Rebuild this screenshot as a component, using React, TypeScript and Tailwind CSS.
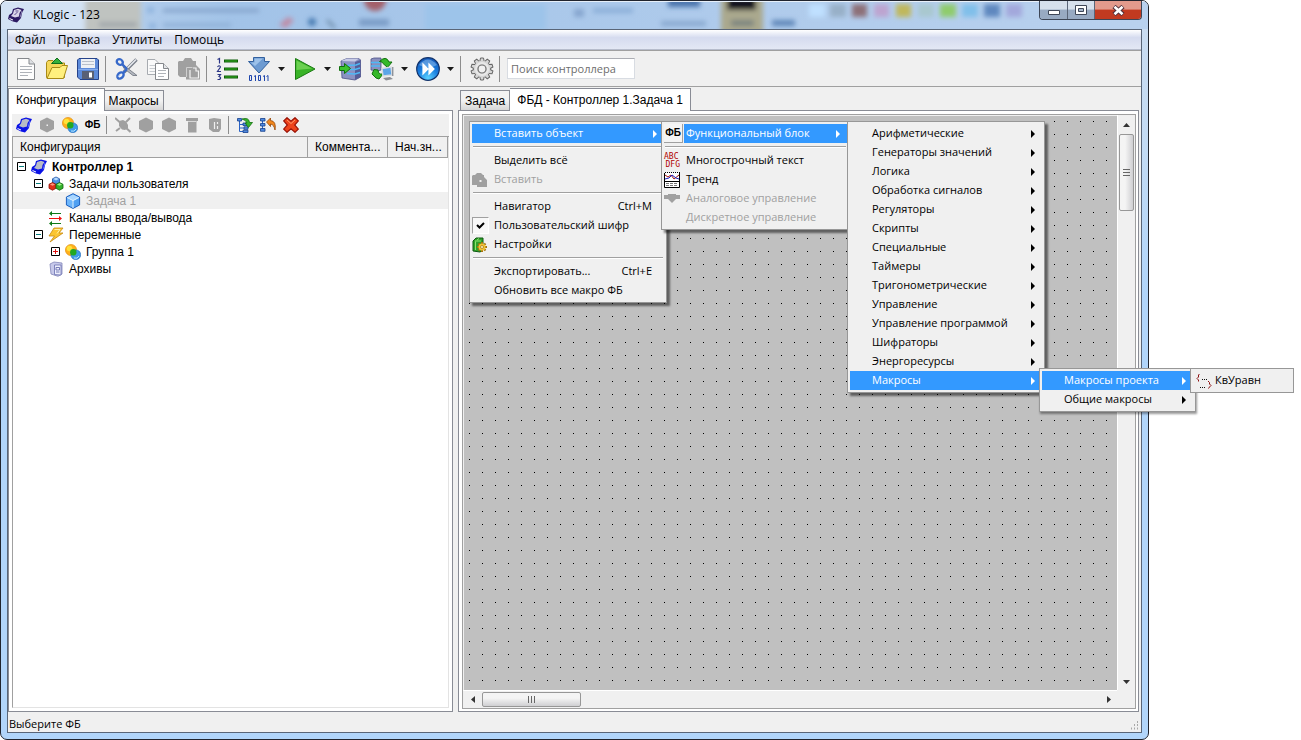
import type { ReactNode } from "react";

const SANS = "font-['Open_Sans','Noto_Sans',sans-serif]";
const ARIAL = "font-['Liberation_Sans',Arial,sans-serif]";

function Svg({ w, h = w, box, children }: { w: number; h?: number; box?: string; children: ReactNode }) {
  return (
    <svg width={w} height={h} viewBox={box ?? `0 0 ${w} ${h}`} className="block shrink-0" aria-hidden="true">
      {children}
    </svg>
  );
}

/* ---------- shared icons ---------- */

const Controller = ({ dark = false }: { dark?: boolean }) => (
  <Svg w={16}>
    <path d="M5 2 L10 .5 L16 2 L14 6 L13 11 L9 15.5 L5 14.5 L0 12 L1 8 L4 6 Z" fill={dark ? "#2c1a63" : "#0a12e6"} />
    <path d="M6 3 L10 1.8 L13.5 3 L11.5 6 L11 9.5 L7 10.5 L3 9 L5 6.5 Z" fill={dark ? "#d9d4e8" : "#b9bcc6"} />
    <path d="M1.5 11 L5 12.500 V13.500 L1.500 12 Z" fill="#fff" />
    <path d="M12 10.500 L14 4" stroke={dark ? "#8f86b5" : "#5a6cff"} />
    {dark && <path d="M6.500 8 l3 -3 M7.500 4 h3" stroke="#5c4c8c" />}
  </Svg>
);

const Circles = () => (
  <Svg w={16}>
    <circle cx="6" cy="6" r="5.6" fill="#ffb01c" stroke="#e08a00" strokeWidth=".6" />
    <circle cx="4.5" cy="4.5" r="2.8" fill="#ffe23a" />
    <circle cx="10.8" cy="10.8" r="4.9" fill="#3f9bea" stroke="#2467b6" strokeWidth=".6" />
    <path d="M9 14 a4 4 0 0 0 5 -2" stroke="#b8e2ff" fill="none" />
    <circle cx="8.3" cy="8.3" r="3.2" fill="#22a822" />
  </Svg>
);

const Fb = () => <span className="font-['Liberation_Sans',Arial,sans-serif] text-[10px] leading-4 font-bold text-black">ФБ</span>;

const Hex = ({ dot = false }: { dot?: boolean }) => (
  <Svg w={16}>
    <path d="M8 .5 L15 4 V12 L8 15.5 L1 12 V4 Z" fill="#a0a0a0" />
    {dot && <path d="M7.500 7.500 h1.500 v1.500 h-1.500 z" fill="#f0f0f0" />}
  </Svg>
);

const Cube = () => (
  <Svg w={16}>
    <path d="M8 .7 L14.6 4 V12 L8 15.4 L1.4 12 V4 Z" fill="#4fa0f2" stroke="#1c60c0" />
    <path d="M8 1.5 L14 4.4 L8 7.4 L2 4.4 Z" fill="#a9d6ff" />
    <path d="M2 5 L7.6 8 V14.6 L2 11.6 Z" fill="#6db6fb" />
    <path d="M2 4.5 L8 7.6 L14 4.5 M8 7.6 V15" stroke="#e3f3ff" fill="none" />
  </Svg>
);

const Cubes = () => (
  <Svg w={16}>
    <path d="M8 1 L11.5 2.8 V6.8 L8 8.6 L4.5 6.8 V2.8 Z" fill="#4b8de0" stroke="#1d4d9d" strokeWidth=".8" />
    <path d="M8 1.6 L10.8 3 L8 4.4 L5.2 3 Z" fill="#b6dbff" />
    <path d="M4.5 6.5 L8 8.3 V12.3 L4.5 14.2 L1 12.3 V8.3 Z" fill="#e0301c" stroke="#8f1408" strokeWidth=".8" />
    <path d="M4.5 7.3 L7 8.6 L4.5 9.8 L2 8.6 Z" fill="#ff9a80" />
    <path d="M11.5 6.5 L15 8.3 V12.3 L11.5 14.2 L8 12.3 V8.3 Z" fill="#34b12c" stroke="#12660e" strokeWidth=".8" />
    <path d="M11.5 7.3 L14 8.6 L11.5 9.8 L9 8.6 Z" fill="#a6f08c" />
  </Svg>
);

const Channels = () => (
  <Svg w={16}>
    <path d="M3 3.5 H13 M4 13.5 H13" stroke="#0f7a18" strokeWidth="1.2" />
    <path d="M1 3.5 L4 1 V6 Z M1 13.5 L4 11 V16 Z" fill="#0f7a18" />
    <path d="M1 8.5 H12" stroke="#f01010" strokeWidth="1.2" />
    <path d="M14 8.5 L11 6 V11 Z" fill="#f01010" />
  </Svg>
);

const Lightning = () => (
  <Svg w={16}>
    <path d="M6 1 H15 L11 6 H15 L2 15 L6.5 9 H1 Z" fill="#fbc531" stroke="#c98a10" strokeWidth=".8" />
    <path d="M6.5 2.5 H12 L9 6.5" stroke="#fff1a8" fill="none" />
  </Svg>
);

const Archive = () => (
  <Svg w={16}>
    <path d="M2 3 L6 1 L14 2 V13 L10 15.3 L3 13 Z" fill="#c7c9ea" stroke="#8285b8" strokeWidth=".8" />
    <path d="M6.5 4 H13 V14 L6.5 13.6 Z" fill="#eceefc" stroke="#6a6eb0" strokeWidth=".8" />
    <path d="M8 6.5 h3.5 v2.500 h-3.500 z M8 11 h3.5" stroke="#6a6eb0" fill="none" strokeWidth=".9" />
  </Svg>
);

/* ---------- main toolbar icons ---------- */

const Page = () => (
  <Svg w={24}>
    <path d="M3.5 1.5 H15 L20.5 7 V22.5 H3.5 Z" fill="#fdfdfd" stroke="#85888c" />
    <path d="M15 1.5 V7 H20.5" fill="#dcdfe3" stroke="#85888c" />
    <path d="M6 9.5 H18 M6 12.5 H18 M6 15.5 H18 M6 18.5 H14" stroke="#aeb2b8" />
  </Svg>
);

const Open = () => (
  <Svg w={24}>
    <path d="M1.5 20.5 V5.5 L3 3.5 H8 L10 6 H19.5 V20.5 Z" fill="#f5d75a" stroke="#a88a16" />
    <path d="M2 21.5 L7 10.5 H15 L17 8.5 H22.5 L18.5 21.5 Z" fill="#fff07e" stroke="#a88a16" />
    <path d="M12 1 L17.5 6.5 H6.5 Z" fill="#35b03b" stroke="#11701c" />
  </Svg>
);

const Save = () => (
  <Svg w={24}>
    <path d="M1.5 3 L3 1.5 H21 L22.5 3 V22.5 H4 L1.5 20 Z" fill="#5d8bda" stroke="#26438a" />
    <path d="M5 2 H19 V11 H5 Z" fill="#eef1f5" />
    <path d="M6 4.5 H18 M6 7.5 H18" stroke="#b9c0cb" />
    <path d="M6 14 H18 V22 H6 Z" fill="#596074" />
    <path d="M13 15.5 H16 V20.5 H13 Z" fill="#fff" />
    <path d="M2 12.5 H22" stroke="#86aef0" />
  </Svg>
);

const Cut = () => (
  <Svg w={24}>
    <path d="M21.5 2.5 L9 15" stroke="#777d87" strokeWidth="3.4" />
    <path d="M21 2.5 L9 14.5" stroke="#e5e8ee" strokeWidth="1.6" />
    <path d="M7 7 L22 18.5 L18 18.5 L9 11.5 Z" fill="#b4b8c0" stroke="#6c727c" strokeWidth=".8" />
    <ellipse cx="4.800" cy="5" rx="3.2" ry="2.6" fill="none" stroke="#3769c9" strokeWidth="2.4" transform="rotate(35 4.800 5)" />
    <ellipse cx="5.5" cy="18.5" rx="3.6" ry="2.6" fill="none" stroke="#3769c9" strokeWidth="2.4" transform="rotate(-45 5.5 18.5)" />
    <path d="M7 7 L12 12 M8 16 L12 12" stroke="#3769c9" strokeWidth="2.4" />
    <path d="M3.500 3.500 l2 0 M3 20 l2 -3" stroke="#9dbdf3" />
  </Svg>
);

const Copy = () => (
  <Svg w={24}>
    <path d="M1.5 2.5 H9 L13 6.5 V17.5 H1.5 Z" fill="#fafafa" stroke="#a7abb0" />
    <path d="M3.5 8.5 H9 M3.5 11.5 H9 M3.5 14.5 H9" stroke="#c8ccd0" />
    <path d="M9.5 6.5 H17.5 L22.5 11.5 V22.5 H9.5 Z" fill="#fff" stroke="#85888c" />
    <path d="M17.5 6.5 V11.5 H22.5" fill="#e3e5e8" stroke="#85888c" />
    <path d="M12 13.5 H20 M12 16.5 H20 M12 19.5 H18" stroke="#b0b4b9" />
  </Svg>
);

const Paste = () => (
  <Svg w={24}>
    <path d="M2 4 H6 L8 1 H14 L16 4 H19 V8 L23 12 V22.5 H9 V20 H3 L1 18 V5 Z" fill="#a0a0a0" />
    <path d="M9.5 20 V10.5 H15.500" stroke="#cfcfcf" fill="none" />
    <path d="M16 11 H19 V14 H21.500 V21 H13 V13" stroke="#f4f4f4" strokeWidth="1.2" fill="none" />
  </Svg>
);

const Numbered = () => (
  <Svg w={24}>
    <path d="M1.5 2.5 L3.5 1.5 V6.5 M1.5 10 Q3.5 7.5 4.5 10 L1.5 14.5 H5 M1.5 17.5 H4.5 L3 19.5 Q6 20.5 3.5 22.5 H1.5" stroke="#2b3585" strokeWidth="1.2" fill="none" />
    <path d="M8 4 H22 M8 12 H22 M8 20 H22" stroke="#0c5c08" strokeWidth="3.2" />
    <path d="M9 4 H21 M9 12 H21 M9 20 H21" stroke="#36b222" strokeWidth="1.2" />
  </Svg>
);

const Download = () => (
  <Svg w={24}>
    <path d="M6.5 .5 H17.5 V4.5 H22.5 L12 16 L1.5 4.5 H6.5 Z" fill="#6d9bd2" stroke="#33619f" />
    <path d="M7.5 1.5 H16 L8 9 L4 5.5 H7.5 Z" fill="#9dc2ea" />
    <path d="M2.500 18.5 h2 v5 h-2 z M7 19.500 l1.500 -1 V24 M11.500 18.5 h2 v5 h-2 z M16 19.500 l1.500 -1 V24 M19.500 19.500 l1.500 -1 V24" stroke="#1f46ad" fill="none" />
  </Svg>
);

const Play = () => (
  <Svg w={24}>
    <path d="M2.5 1.5 L22 12 L2.5 22.5 Z" fill="#39b327" stroke="#1b7a12" />
    <path d="M3.5 3.5 L19 11.5 L3.5 13 Z" fill="#6bd050" />
  </Svg>
);

const DbArrow = () => (
  <Svg w={24}>
    <path d="M2 4 L8 1.500 H20 L21.500 3 V20 L16 23 L3 21 Z" fill="#8b92c2" stroke="#4b5186" strokeWidth=".8" />
    <path d="M2 4 L8 1.500 H20 L16 4.500 Z" fill="#c7cbe6" />
    <path d="M16 5 L21.500 3 V20 L16 23 Z" fill="#565d98" />
    <path d="M8 8.5 L17 8 L21 6.500 M10 12.5 H16 L21 11 M8 16.5 L16 17 L21 15.500" stroke="#4eb8f5" strokeWidth="1.400" fill="none" />
    <path d="M.5 9.5 H5.5 V6.5 L11.5 11.5 L5.5 16.5 V13.5 H.5 Z" fill="#3cc42f" stroke="#11700e" />
  </Svg>
);

const Sync = () => (
  <Svg w={24}>
    <path d="M1 2 L4 1 H11 V13 L8 14 L1 13 Z" fill="#8a90be" stroke="#4b5186" strokeWidth=".8" />
    <path d="M1 5.5 H10 M1 9 H10" stroke="#4eb8f5" strokeWidth="1.400" />
    <path d="M9.500 4.500 Q16 -2 19 5 H22 L17.5 10.5 L12.500 6 Q12.500 4.500 9.500 4.500 Z" fill="#35b829" stroke="#11700e" />
    <path d="M4 12.5 L2 17 L6 21 L9 22 L13 17 H10.5 Q8 16.500 8 13 Z" fill="#35b829" stroke="#11700e" />
    <path d="M12 11.5 L21 10 L22 18 L13 19 Z" fill="#5ba5e8" stroke="#d5dae0" strokeWidth="1.400" />
    <path d="M13 21 L20 20 L23 22 L16 23.500 Z" fill="#8b8e94" />
    <path d="M22.800 10 V19" stroke="#6a6f78" />
  </Svg>
);

const Forward = () => (
  <Svg w={24}>
    <defs>
      <radialGradient id="ball" cx=".5" cy=".9" r=".9">
        <stop offset="0" stopColor="#5cd2ff" />
        <stop offset=".5" stopColor="#1a7fe0" />
        <stop offset="1" stopColor="#1455b5" />
      </radialGradient>
    </defs>
    <circle cx="12" cy="12" r="11.3" fill="url(#ball)" stroke="#12336b" strokeWidth="1.2" />
    <path d="M3 8 Q12 -3 21 8 Q12 13 3 8 Z" fill="#a8d2f8" opacity=".45" />
    <path d="M7 7 L12 12 L7 17 Z M13 7 L18 12 L13 17 Z" fill="#fff" stroke="#fff" strokeWidth="1.200" />
  </Svg>
);

const teeth = [0, 36, 72, 108, 144, 180, 216, 252, 288, 324];
const Gear = () => (
  <Svg w={24}>
    {teeth.map((a) => (
      <path key={a} d="M9.8 4.5 L10.5 1 H13.5 L14.2 4.5" fill="#d6d6d6" stroke="#666" transform={`rotate(${a} 12 12)`} />
    ))}
    <circle cx="12" cy="12" r="8.2" fill="#d6d6d6" />
    <circle cx="12" cy="12" r="6" fill="none" stroke="#e8e8e8" strokeWidth="2" />
    <circle cx="12" cy="12" r="4" fill="#f0f0f0" stroke="#707070" strokeWidth="1.2" />
  </Svg>
);

/* ---------- configuration toolbar icons ---------- */

const Plug = () => (
  <Svg w={16}>
    <path d="M4 4 L8 3 L11 4.500 L13 8 V11 L10 13 L7 12.500 L4 9 Z" fill="#a0a0a0" />
    <path d="M0 1 L15.500 15 M11 5 L15 1 M5 11 L1 14" stroke="#a0a0a0" strokeWidth="2" />
  </Svg>
);
const Bin = () => (
  <Svg w={16}>
    <path d="M2 1 H14 V4 H12.5 V15.5 H4 V4 H2 Z" fill="#a0a0a0" />
    <path d="M4 4.5 H12" stroke="#d8d8d8" />
  </Svg>
);
const Book = () => (
  <Svg w={16}>
    <path d="M2 2 L7 1 L14 2 V12 L12 15 H6 L2 12 Z" fill="#a0a0a0" />
    <path d="M7.5 5 V12 M10.5 5 V7 M10.5 9 V12" stroke="#efefef" strokeWidth="1.2" />
  </Svg>
);
const TreeAdd = () => (
  <Svg w={16}>
    <path d="M2.5 3 V14.5 H8 M2.5 7.5 H8 M2.5 11 H8" stroke="#2a62c4" fill="none" />
    <path d="M.5 1.5 h4 v2.5 h-4 z M6 6 h4 v2.5 h-4 z M7 9.8 h4 v2.5 h-4 z M6 13.2 h5 v2.3 h-5 z" fill="#4f8ae0" stroke="#153f8c" strokeWidth=".8" />
    <path d="M5 2 Q12 0 12.5 5.5 H15.5 L11.5 10.5 L8 6 H10 Q9 3 5 2 Z" fill="#37b32c" stroke="#11700e" strokeWidth=".8" />
  </Svg>
);
const TreeUndo = () => (
  <Svg w={16}>
    <path d="M2.5 2 V14" stroke="#2a62c4" />
    <path d="M.5 1.5 h4.5 v2.5 h-4.5 z M.5 6.5 h4.5 v2.5 h-4.5 z M.5 11.5 h4.5 v2.8 h-4.5 z" fill="#4f8ae0" stroke="#153f8c" strokeWidth=".8" />
    <path d="M6.5 5 L10.5 1 V3.5 Q16.5 4 15 13 Q14 7.5 10.5 7 V9.5 Z" fill="#f2871d" stroke="#96480a" strokeWidth=".8" />
  </Svg>
);
const RedX = () => (
  <Svg w={16}>
    <path d="M4 .7 L8 4.3 L12 .7 L15.3 4 L11.7 8 L15.3 12 L12 15.3 L8 11.7 L4 15.3 L.7 12 L4.3 8 L.7 4 Z" fill="#ee431c" stroke="#9c1408" strokeWidth="1.2" />
    <path d="M4 3 L8 6.5 L12 3" stroke="#ff9a6b" fill="none" />
  </Svg>
);

/* ---------- menu icons ---------- */

const PasteSmall = () => (
  <Svg w={16}>
    <path d="M1 3 H3 L5 1 H9 L11 3 H12 V5 L15 8 V15 H5 V13 H0 V4 Z" fill="#a0a0a0" />
    <path d="M7.500 8 h2 v2 h-2 z" fill="#f0f0f0" />
  </Svg>
);
const Check = () => (
  <span className="flex size-[17px] items-center justify-center border border-[#fff] border-t-[#a0a0a0] border-l-[#a0a0a0] bg-[#f8f8f8]">
    <Svg w={9}>
      <path d="M1 4 L3.5 6.5 L8 2" stroke="#000" strokeWidth="2" fill="none" />
    </Svg>
  </span>
);
const Settings = () => (
  <Svg w={16}>
    <path d="M1 4 L4 1 L11 1 V13 L8 15 L1 14 Z" fill="#2fa12b" stroke="#0e5a10" />
    <path d="M3 4 H9 M3.5 4.5 V13 M7 1.5 L5 3" stroke="#8ce66f" />
    {[0, 45, 90, 135].map((a) => (
      <path key={a} d="M10 5 V15" stroke="#a4740c" strokeWidth="2" transform={`rotate(${a} 10 10)`} />
    ))}
    <circle cx="10" cy="10" r="3.5" fill="#f3c134" />
    <circle cx="10" cy="10" r="1.5" fill="#fff4c8" stroke="#a4740c" strokeWidth=".7" />
  </Svg>
);
const AbcDfg = () => (
  <span className="block w-4 font-['DejaVu_Sans_Mono',monospace] text-[8px] leading-2 text-[#b00000]">
    <span className="block">ABC</span>
    <span className="block text-right">DFG</span>
  </span>
);
const Trend = () => (
  <Svg w={16}>
    <path d="M.5 1 V15.5 H15.5 V1" stroke="#000" fill="#fff" />
    <path d="M1 .5 H16" stroke="#000" strokeDasharray="1 1" />
    <path d="M1 3 L4 5 L7 3 L10 7 L15 3" stroke="#a01010" fill="none" />
    <path d="M1 7 L5 6 L8 3 L12 6 L15 7" stroke="#2020c0" fill="none" />
    <path d="M0 9.500 H16" stroke="#000" />
    <path d="M2 11.5 H14 M2 13.5 H14" stroke="#777" strokeDasharray="3 1" />
  </Svg>
);
const ArrowShape = () => (
  <Svg w={16}>
    <path d="M0 4 H4 V3 H12 V4 H16 V8 H12 L8 12 L4 8 H0 Z" fill="#a0a0a0" />
  </Svg>
);
const MacroIcon = () => (
  <span className="pl-[3px]">
    <Svg w={16}>
      <path d="M3.5 1 L2.5 2 V4 L1 5.5 L2.5 7 V8.500" stroke="#8c1010" fill="none" />
      <path d="M12 8 L13.5 9.5 V11 L15 12.5 L13.500 14 L12.500 15.5" stroke="#8c1010" fill="none" />
      <path d="M6 6.5 H12 M4 14.5 H10" stroke="#111" strokeDasharray="1 1" />
    </Svg>
  </span>
);
const FbBox = () => (
  <span className="flex size-[19px] items-center justify-center border-r border-b border-[#a0a0a0] bg-[#f4f4f4]">
    <Fb />
  </span>
);

/* ---------- building blocks ---------- */

const Arrow = () => (
  <Svg w={5} h={8}>
    <path d="M0 0 L4 4 L0 8 Z" fill="currentColor" />
  </Svg>
);

type Item =
  | "-"
  | { label: string; icon?: ReactNode; key?: string; sub?: boolean; active?: boolean; disabled?: boolean };

function Menu({ items, className }: { items: Item[]; className: string }) {
  return (
    <ul role="menu" className={`absolute border border-[#979797] bg-[#f0f0f0] p-0.5 text-[11px] text-black ${SANS} ${className}`}>
      {items.map((it, i) =>
        it === "-" ? (
          <li key={i} role="separator" className="flex h-2 items-center px-px">
            <span className="h-0.5 w-full border-t border-[#a0a0a0] border-b border-b-white" />
          </li>
        ) : (
          <li key={i} role="none" className={it.active && !it.icon ? "bg-[#3399ff]" : ""}>
            <button
              role="menuitem"
              disabled={it.disabled}
              className={`flex h-[19px] w-full items-center text-left whitespace-nowrap ${it.active ? "text-white" : ""} ${it.disabled ? "text-[#a0a0a0]" : ""}`}
            >
              <span className="flex w-5 shrink-0 items-center text-black">{it.icon}</span>
              <span className={`flex h-full flex-1 items-center pr-1.5 pl-0.5 ${it.active ? "bg-[#3399ff]" : ""}`}>
                <span className="flex-1">{it.label}</span>
                {it.key && <span className="pr-1.5">{it.key}</span>}
                {it.sub && <Arrow />}
              </span>
            </button>
          </li>
        ),
      )}
    </ul>
  );
}

const Tool = ({ label, children }: { label: string; children: ReactNode }) => (
  <button aria-label={label} className="flex w-[31px] shrink-0 items-center justify-center">
    {children}
  </button>
);
const Drop = () => (
  <button aria-label="Ещё" className="flex w-[15px] shrink-0 items-center justify-center">
    <Svg w={7} h={4}>
      <path d="M0 0 H7 L3.5 4 Z" fill="#1a1a1a" />
    </Svg>
  </button>
);
const Sep = () => (
  <span className="flex w-2 shrink-0 pl-0.5">
    <span className="h-[26px] w-px bg-[#8d8d8d]" />
  </span>
);
const SmallTool = ({ label, children }: { label: string; children: ReactNode }) => (
  <button aria-label={label} className="flex w-[23px] shrink-0 items-center justify-center">
    {children}
  </button>
);
const SmallSep = () => (
  <span className="flex w-[7px] shrink-0 pl-0.5">
    <span className="h-[18px] w-px bg-[#8d8d8d]" />
  </span>
);

function Tab({ active = false, className = "", children }: { active?: boolean; className?: string; children: ReactNode }) {
  return (
    <button
      role="tab"
      aria-selected={active}
      className={`border border-[#898c95] border-b-0 text-xs whitespace-nowrap ${ARIAL} ${
        active ? "relative -mb-px h-[23px] bg-white px-[7px]" : "h-5 bg-linear-to-b from-[#f2f2f2] from-50% to-[#d6d6d6] px-1"
      } ${className}`}
    >
      {children}
    </button>
  );
}

const Expander = ({ open }: { open: boolean }) => (
  <Svg w={9}>
    <path d="M.5 .5 H8.5 V8.5 H.5 Z" fill="#fff" stroke="#000" />
    <path d="M2 4.5 H7" stroke={open ? "#067a7a" : "#e01010"} />
    {!open && <path d="M4.5 2 V7" stroke="#e01010" />}
  </Svg>
);

const tree = [
  { label: "Контроллер 1", level: 0, open: true, icon: <Controller />, style: "font-bold" },
  { label: "Задачи пользователя", level: 1, open: true, icon: <Cubes />, style: "" },
  { label: "Задача 1", level: 2, open: null, icon: <Cube />, style: "text-[#a0a0a0]" },
  { label: "Каналы ввода/вывода", level: 1, open: null, icon: <Channels />, style: "" },
  { label: "Переменные", level: 1, open: true, icon: <Lightning />, style: "" },
  { label: "Группа 1", level: 2, open: false, icon: <Circles />, style: "" },
  { label: "Архивы", level: 1, open: null, icon: <Archive />, style: "" },
];
const indents = ["pl-1", "pl-[21px]", "pl-[38px]"];

const contextMenu: Item[] = [
  { label: "Вставить объект", sub: true, active: true },
  "-",
  { label: "Выделить всё" },
  { label: "Вставить", icon: <PasteSmall />, disabled: true },
  "-",
  { label: "Навигатор", key: "Ctrl+M" },
  { label: "Пользовательский шифр", icon: <Check /> },
  { label: "Настройки", icon: <Settings /> },
  "-",
  { label: "Экспортировать...", key: "Ctrl+E" },
  { label: "Обновить все макро ФБ" },
];
const insertMenu: Item[] = [
  { label: "Функциональный блок", icon: <FbBox />, sub: true, active: true },
  "-",
  { label: "Многострочный текст", icon: <AbcDfg /> },
  { label: "Тренд", icon: <Trend /> },
  { label: "Аналоговое управление", icon: <ArrowShape />, disabled: true },
  { label: "Дискретное управление", disabled: true },
];
const blockMenu: Item[] = [
  "Арифметические",
  "Генераторы значений",
  "Логика",
  "Обработка сигналов",
  "Регуляторы",
  "Скрипты",
  "Специальные",
  "Таймеры",
  "Тригонометрические",
  "Управление",
  "Управление программой",
  "Шифраторы",
  "Энергоресурсы",
  "Макросы",
].map((label) => ({ label, sub: true, active: label === "Макросы" }));

/* Blurred desktop seen through the glass caption */
const Glass = () => (
  <svg className="absolute inset-0 h-full w-full" aria-hidden="true">
    <defs>
      <filter id="soft">
        <feGaussianBlur stdDeviation="2.5" />
      </filter>
    </defs>
    <g filter="url(#soft)">
      <path d="M-10 -5 H84 V40 H-10 Z" fill="#d3e2f4" />
      <path d="M84 -5 H140 V40 H84 Z" fill="#bfc3c0" />
      <path d="M98 20 H136 V25 H98 Z" fill="#a0a7ac" />
      <path d="M162 7 H258 V10 H162 Z" fill="#7e9cc4" />
      <path d="M146 5 h7 v6 h-7 z M148 21 h7 v6 h-7 z" fill="#8fb4de" />
      <path d="M162 21 H230 V25 H162 Z" fill="#8fb0d6" />
      <path d="M278 23 l9 -8 l6 3 l-8 8 z" fill="#c08aa4" />
      <circle cx="311" cy="20" r="4" fill="#4579b0" />
      <path d="M326 18 l8 8" stroke="#6d8ba8" strokeWidth="3" />
      <circle cx="374" cy="-2" r="11" fill="#a3606a" />
      <path d="M358 17 H388 V24 H358 Z" fill="#7a9cc6" />
      <path d="M424 2 H545 V28 H424 Z" fill="#9dc4ea" />
      <path d="M573 7 h10 v8 h-10 z" fill="#86a6cf" />
      <path d="M592 6 H632 V11 H592 Z" fill="#8bafd8" />
      <path d="M667 -4 H699 V5 H667 Z" fill="#4c74ad" />
      <path d="M660 19 H705 V24 H660 Z" fill="#88a8cf" />
      <path d="M720 -5 H762 V40 H720 Z" fill="#aaa98e" />
      <path d="M726 -4 H755 V8 H726 Z" fill="#0b0f1c" />
      <path d="M730 18 H753 V24 H730 Z" fill="#7c8480" />
      <path d="M771 18 H794 V24 H771 Z" fill="#5f86b8" />
      <path d="M808 2 H824 V15 H808 Z" fill="#bfe0ff" />
      <path d="M829 2 H845 V15 H829 Z" fill="#98b0c8" />
      <path d="M851 2 H866 V15 H851 Z" fill="#8d7078" />
      <path d="M873 2 H888 V15 H873 Z" fill="#bda4d0" />
      <path d="M895 2 H910 V15 H895 Z" fill="#c0b85c" />
      <path d="M917 2 H933 V15 H917 Z" fill="#a9c8cf" />
      <path d="M939 2 H955 V15 H939 Z" fill="#8fcc6c" />
      <path d="M961 2 H977 V15 H961 Z" fill="#80bfea" />
      <path d="M983 2 H999 V15 H983 Z" fill="#5f88bf" />
      <path d="M1005 2 H1021 V15 H1005 Z" fill="#a3a8dc" />
    </g>
  </svg>
);

export default function App() {
  return (
    <div className="relative h-screen min-h-[480px] w-full overflow-hidden bg-white pr-[152px] text-black">
      <div className="relative flex h-full flex-col overflow-hidden rounded-[7px] border border-[#20242e] bg-linear-to-b from-[#cbdcf0] via-[#c3dbf4] via-20% to-[#b1d5fa] to-40% px-1.5 pb-1.5">
        <div className="absolute inset-x-0 top-0 h-7 border-t border-white/70 bg-linear-to-r from-[#c4d8ef] via-[#a2c3e8] via-20% to-[#b9d1ee]">
          <Glass />
        </div>

        <header className="relative flex h-7 shrink-0 items-start justify-between">
          <div className="flex h-full items-center gap-[9px]">
            <span className="pl-px"><Controller dark /></span>
            <h1 className={`text-xs ${SANS}`}>KLogic - 123</h1>
          </div>
          <div className="flex h-[19px] overflow-hidden rounded-b-[4px] border border-t-0 border-[#3d4656]">
            <button aria-label="Свернуть" className="flex w-7 items-center justify-center border-r border-[#5a6578] bg-linear-to-b from-[#d6e0ec] from-45% to-[#98aac2] to-50% pt-1">
              <Svg w={12} h={5}><path d="M.5 .5 H11.5 V4.5 H.5 Z" fill="#fff" stroke="#3f4757" /></Svg>
            </button>
            <button aria-label="Развернуть" className="flex w-[27px] items-center justify-center border-r border-[#5a6578] bg-linear-to-b from-[#d6e0ec] from-45% to-[#98aac2] to-50%">
              <Svg w={12} h={10}>
                <path d="M.5 .5 H11.5 V9.5 H.5 Z" fill="#fff" stroke="#3f4757" />
                <path d="M3.5 3.5 H8.5 V6.5 H3.5 Z" fill="#a9b8cc" stroke="#3f4757" />
              </Svg>
            </button>
            <button aria-label="Закрыть" className="flex w-[46px] items-center justify-center bg-linear-to-b from-[#e29a8c] from-45% to-[#c23a20] to-50%">
              <Svg w={13} h={11}>
                <path d="M2 1.5 L11 9.5 M11 1.5 L2 9.5" stroke="#50303a" strokeWidth="4.6" />
                <path d="M2.5 1.8 L10.5 9.2 M10.5 1.8 L2.5 9.2" stroke="#fff" strokeWidth="2.6" />
              </Svg>
            </button>
          </div>
        </header>

        <div className="relative flex min-h-0 flex-1 flex-col border border-[#596577] bg-[#f0f0f0]">
          <nav className={`flex h-5 shrink-0 items-center gap-3 border-b border-[#b6bccc] bg-linear-to-b from-white via-[#d5dbef] via-40% to-[#e3e8f5] px-[7px] text-xs ${SANS}`}>
            {["Файл", "Правка", "Утилиты", "Помощь"].map((m) => (
              <button key={m}>{m}</button>
            ))}
          </nav>

          <div className="flex h-[37px] shrink-0 items-center border-y border-[#a0a0a0] pl-0.5">
            <Tool label="Создать"><Page /></Tool>
            <Tool label="Открыть"><Open /></Tool>
            <Tool label="Сохранить"><Save /></Tool>
            <Sep />
            <Tool label="Вырезать"><Cut /></Tool>
            <Tool label="Копировать"><Copy /></Tool>
            <Tool label="Вставить"><Paste /></Tool>
            <Sep />
            <Tool label="Порядок"><Numbered /></Tool>
            <Tool label="Загрузить"><Download /></Tool>
            <Drop />
            <Tool label="Запуск"><Play /></Tool>
            <Drop />
            <Tool label="Сервер"><DbArrow /></Tool>
            <Tool label="Синхронизация"><Sync /></Tool>
            <Drop />
            <Tool label="Вперёд"><Forward /></Tool>
            <Drop />
            <Sep />
            <Tool label="Параметры"><Gear /></Tool>
            <Sep />
            <input
              aria-label="Поиск контроллера"
              placeholder="Поиск контроллера"
              className={`ml-0.5 h-[21px] w-32 border border-[#d8dce2] border-t-[#abadb3] bg-white px-[3px] text-[11px] placeholder:text-[#6d6d6d] ${SANS}`}
            />
          </div>

          <div className="flex min-h-0 flex-1 gap-[5px] pr-0.5">
            {/* configuration side */}
            <section className="flex w-[445px] shrink-0 flex-col">
              <div role="tablist" className="flex h-[23px] shrink-0 items-end">
                <Tab active>Конфигурация</Tab>
                <Tab className="border-l-0">Макросы</Tab>
              </div>
              <div className="flex min-h-0 flex-1 flex-col border border-[#898c95] bg-white p-[3px]">
                <div className="flex h-[23px] shrink-0 items-center border-b border-[#a0a0a0] bg-[#f0f0f0]">
                  <SmallTool label="Контроллер"><Controller /></SmallTool>
                  <SmallTool label="Модуль"><Hex dot /></SmallTool>
                  <SmallTool label="Группа"><Circles /></SmallTool>
                  <SmallTool label="Блок"><Fb /></SmallTool>
                  <SmallSep />
                  <SmallTool label="Отключить"><Plug /></SmallTool>
                  <SmallTool label="Задача"><Hex /></SmallTool>
                  <SmallTool label="Подзадача"><Hex /></SmallTool>
                  <SmallTool label="Архив"><Bin /></SmallTool>
                  <SmallTool label="Журнал"><Book /></SmallTool>
                  <SmallSep />
                  <SmallTool label="Развернуть"><TreeAdd /></SmallTool>
                  <SmallTool label="Отменить"><TreeUndo /></SmallTool>
                  <SmallTool label="Удалить"><RedX /></SmallTool>
                </div>
                <div className={`flex-1 border border-[#e3e3e3] border-t-0 border-l-[#a0a0a0] text-xs ${ARIAL}`}>
                  <div className="flex h-[21px] items-center border-b border-[#a0a0a0] bg-[#f0f0f0]">
                    <span className="flex h-full flex-1 items-center border-r border-[#a0a0a0] pl-[7px]">Конфигурация</span>
                    <span className="flex h-full w-20 items-center border-r border-[#a0a0a0] pl-[7px]">Коммента...</span>
                    <span className="flex h-full w-[60px] items-center border-r border-[#a0a0a0] pl-[7px]">Нач.зн...</span>
                  </div>
                  <ul role="tree">
                    {tree.map((n) => (
                      <li
                        key={n.label}
                        role="treeitem"
                        aria-expanded={n.open ?? undefined}
                        className={`flex h-[17px] items-center ${indents[n.level]} ${n.label === "Задача 1" ? "bg-[#f0f0f0]" : ""}`}
                      >
                        <span className="w-3.5">{n.open !== null && <Expander open={n.open} />}</span>
                        {n.icon}
                        <span className={`pl-[5px] ${n.style}`}>{n.label}</span>
                      </li>
                    ))}
                  </ul>
                </div>
              </div>
            </section>

            {/* diagram editor */}
            <section className="flex min-w-0 flex-1 flex-col">
              <div role="tablist" className="flex h-[23px] shrink-0 items-end pl-0.5">
                <Tab>Задача</Tab>
                <Tab active className="border-l-0">ФБД - Контроллер 1.Задача 1</Tab>
              </div>
              <div className="flex min-h-0 flex-1 border border-[#898c95] bg-white p-0.5 pt-[3px] pl-[3px]">
                <div className="grid min-w-0 flex-1 grid-cols-[1fr_18px] grid-rows-[1fr_18px] border border-[#a0a0a0] bg-[#f0f0f0]">
                  <div className="mt-px ml-px bg-[#c0c0c0]">
                    <svg className="block h-full w-full" aria-hidden="true">
                      <defs>
                        <pattern id="grid" width="13" height="13" patternUnits="userSpaceOnUse">
                          <rect x="5" y="5" width="1" height="1" fill="#000" shapeRendering="crispEdges" />
                        </pattern>
                      </defs>
                      <rect width="100%" height="100%" fill="url(#grid)" />
                    </svg>
                  </div>
                  <div className="flex flex-col items-center border-l border-white">
                    <span className="flex h-[19px] items-center"><Svg w={7} h={4}><path d="M0 4 H7 L3.5 0 Z" fill="#333" /></Svg></span>
                    <span className="flex h-[77px] w-[15px] items-center justify-center rounded-[2px] border border-[#979797] bg-linear-to-r from-[#f4f4f4] from-40% to-[#cfcfd2]">
                      <Svg w={7} h={8}><path d="M0 .5 H7 M0 3.5 H7 M0 6.5 H7" stroke="#666" /></Svg>
                    </span>
                    <span className="flex-1" />
                    <span className="flex h-4 items-center"><Svg w={7} h={4}><path d="M0 0 H7 L3.5 4 Z" fill="#333" /></Svg></span>
                  </div>
                  <div className="flex items-center border-t border-white">
                    <span className="flex w-[19px] justify-center"><Svg w={4} h={7}><path d="M4 0 V7 L0 3.5 Z" fill="#333" /></Svg></span>
                    <span className="flex h-[15px] w-[99px] items-center justify-center rounded-[2px] border border-[#979797] bg-linear-to-b from-[#f4f4f4] from-40% to-[#cfcfd2]">
                      <Svg w={8} h={7}><path d="M.5 0 V7 M3.5 0 V7 M6.5 0 V7" stroke="#666" /></Svg>
                    </span>
                    <span className="flex-1" />
                    <span className="flex w-[17px] justify-center"><Svg w={4} h={7}><path d="M0 0 V7 L4 3.5 Z" fill="#333" /></Svg></span>
                  </div>
                  <div />
                </div>
              </div>
            </section>
          </div>

          <footer className={`flex h-5 shrink-0 items-center justify-between pt-1 pl-px text-[11px] ${SANS}`}>
            <span>Выберите ФБ</span>
            <span className="self-end pr-0.5 pb-0.5">
              <Svg w={9}><path d="M7 1 h1 M4 4 h1 M7 4 h1 M1 7.5 h1 M4 7.5 h1 M7 7.5 h1" stroke="#a8a8a8" strokeWidth="2" /></Svg>
            </span>
          </footer>
        </div>
      </div>

      <Menu items={contextMenu} className="top-[121px] left-[469px] w-[198px] shadow-[3px_3px_2px_#00000080]" />
      <Menu items={insertMenu} className="top-[121px] left-[661px] w-[189px] shadow-[3px_3px_2px_#00000080]" />
      <Menu items={blockMenu} className="top-[121px] left-[847px] w-[198px] shadow-[3px_3px_2px_#00000080]" />
      <Menu
        items={[
          { label: "Макросы проекта", sub: true, active: true },
          { label: "Общие макросы", sub: true },
        ]}
        className="top-[368px] left-[1039px] w-[157px] shadow-[1px_2px_2px_#00000066]"
      />
      <Menu items={[{ label: "КвУравн", icon: <MacroIcon /> }]} className="top-[368px] left-[1190px] w-[104px]" />
    </div>
  );
}
